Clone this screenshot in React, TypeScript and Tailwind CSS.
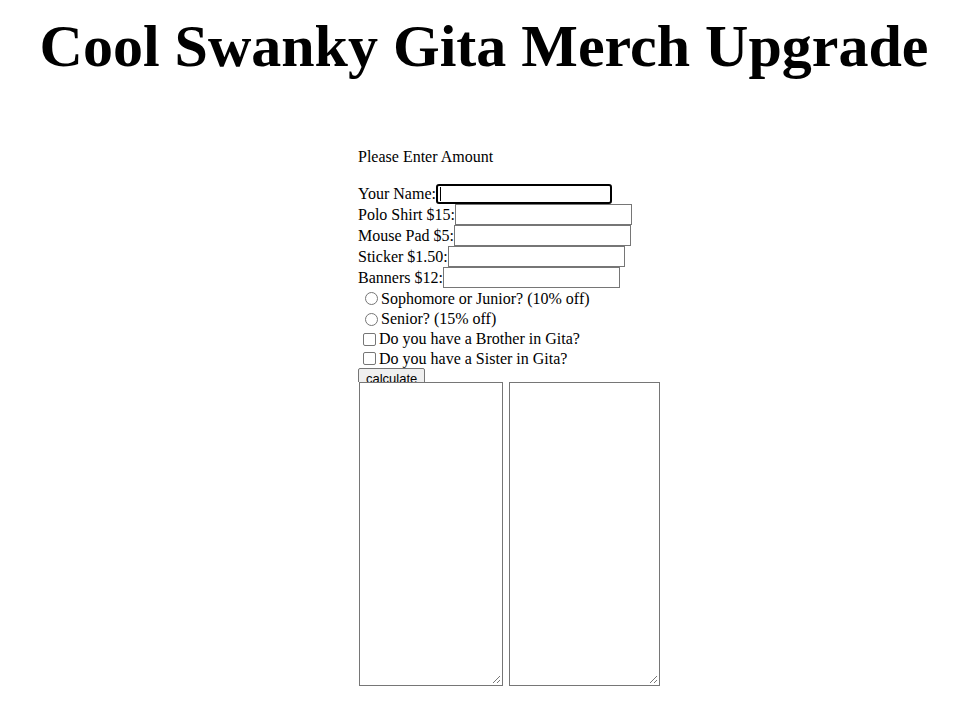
const fields = [
  { label: "Polo Shirt $15:" },
  { label: "Mouse Pad $5:" },
  { label: "Sticker $1.50:" },
  { label: "Banners $12:" },
];

const Radio = () => (
  <span className="inline-block w-[13px] h-[13px] rounded-full border border-[#767676] bg-white ml-[7px] mr-[3px]" />
);

const Check = () => (
  <span className="inline-block w-[13px] h-[13px] rounded-[2px] border border-[#767676] bg-white ml-[5px] mr-[3px]" />
);

const Grip = () => (
  <svg className="absolute right-[1px] bottom-[1px]" width="9" height="9" viewBox="0 0 9 9">
    <path d="M8 1 L1 8 M8 5 L5 8" stroke="#777" strokeWidth="1" />
  </svg>
);

export default function App() {
  return (
    <div className="min-h-[726px] bg-white text-black font-['Liberation_Serif',serif]">
      <h1 className="text-center text-[60px] font-bold leading-none pt-[16px] pl-[11px]">Cool Swanky Gita Merch Upgrade</h1>

      <div className="pl-[358px] pt-[72px] text-[16px]">
        <p className="leading-[18px]">Please Enter Amount</p>

        <div className="mt-[17px] flex items-center h-[21px]">
          <span>Your Name:</span>
          <span className="w-[176px] h-[20px] border-2 border-black rounded-[3px] bg-white flex items-center pl-[2px]">
            <span className="w-px h-[14px] bg-black" />
          </span>
        </div>
        {fields.map((f) => (
          <div key={f.label} className="flex items-center h-[21px]">
            <span>{f.label}</span>
            <span className="w-[177px] h-[21px] border border-[#767676] bg-white" />
          </div>
        ))}

        <div className="flex items-center h-[21px]">
          <Radio />
          <span>Sophomore or Junior? (10% off)</span>
        </div>
        <div className="flex items-center h-[20px]">
          <Radio />
          <span>Senior? (15% off)</span>
        </div>
        <div className="flex items-center h-[20px]">
          <Check />
          <span>Do you have a Brother in Gita?</span>
        </div>
        <div className="flex items-center h-[19px]">
          <Check />
          <span>Do you have a Sister in Gita?</span>
        </div>

        <div className="flex items-start h-[14px] overflow-hidden">
          <button className="h-[21px] px-[7px] border border-[#767676] rounded-[2px] bg-[#efefef] text-[13px] leading-none font-['Liberation_Sans',sans-serif]">
            calculate
          </button>
        </div>

        <div className="flex gap-[6px] ml-px">
          <div className="relative w-[144px] h-[304px] border border-[#767676] bg-white">
            <Grip />
          </div>
          <div className="relative w-[151px] h-[304px] border border-[#767676] bg-white">
            <Grip />
          </div>
        </div>
      </div>
    </div>
  );
}
